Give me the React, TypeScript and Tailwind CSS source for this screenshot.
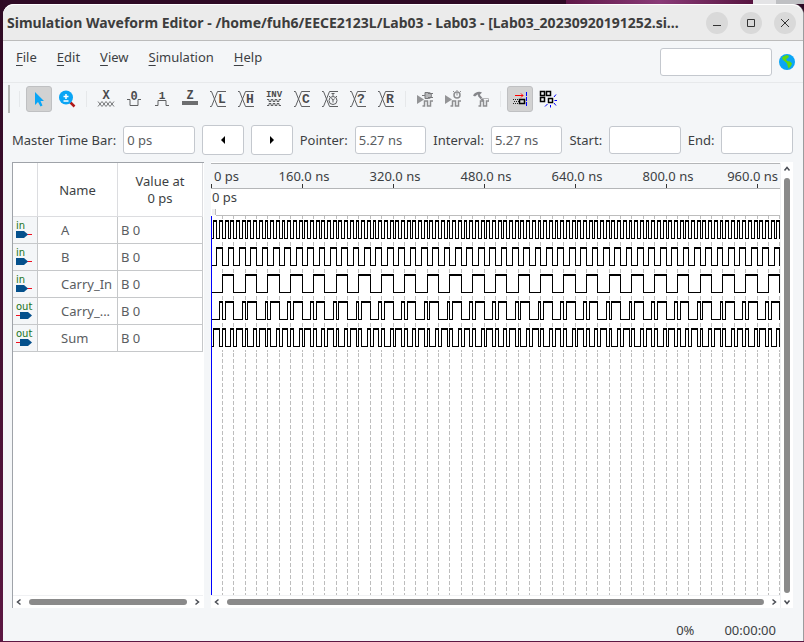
import type { ReactNode } from "react";

const PX_PER_NS = 0.56875;
const SPAN_NS = 3000;
const ROW = 27;

type Signal = { name: string; label: string; dir: "in" | "out"; level: (n: number) => boolean };

const bit = (n: number, b: number) => ((n >> b) & 1) === 1;
const ones = (n: number) => Number(bit(n, 0)) + Number(bit(n, 1)) + Number(bit(n, 2));

const signals: Signal[] = [
  { name: "A", label: "A", dir: "in", level: (n) => bit(n, 0) },
  { name: "B", label: "B", dir: "in", level: (n) => bit(n, 1) },
  { name: "Carry_In", label: "Carry_In", dir: "in", level: (n) => bit(n, 2) },
  { name: "Carry_Out", label: "Carry_...", dir: "out", level: (n) => ones(n) >= 2 },
  { name: "Sum", label: "Sum", dir: "out", level: (n) => ones(n) % 2 === 1 },
];

const xAt = (ns: number) => Math.floor(ns * PX_PER_NS);

function wave(level: (n: number) => boolean, row: number) {
  const high = 5 + row * ROW;
  const low = high + 18;
  let edges = "";
  let tops = "";
  let bottoms = "";
  let prev = level(0);
  let start = 0;
  for (let n = 1; n <= SPAN_NS / 5; n++) {
    const cur = level(n);
    if (cur !== prev) {
      const x = xAt(n * 5);
      edges += `M${x + 0.5} ${high}V${low + 1}`;
      if (prev) tops += `M${start} ${high + 1}H${x + 1}`;
      else bottoms += `M${start} ${low + 0.5}H${x + 1}`;
      start = x;
      prev = cur;
    }
  }
  return { edges, tops, bottoms };
}

const gridXs = Array.from({ length: SPAN_NS / 20 }, (_, i) => xAt((i + 1) * 20) + 0.5);
const ticks = [1, 2, 3, 4, 5];

function Ruler() {
  return (
    <svg className="block h-[26px] w-full shrink-0 border-t border-b border-[#b4b6b8] bg-[#f4f6f8]" aria-label="Time ruler">
      <path d="M0.5 20V25" stroke="#333" />
      <text x="3" y="17" className="fill-[#3c3f43] text-[13px]">0 ps</text>
      {ticks.map((t) => (
        <g key={t}>
          <text x={t * 91 + 2} y="17" textAnchor="middle" className="fill-[#3c3f43] text-[13px]">
            {`${t * 160}.0 ns`}
          </text>
          <path d={`M${t * 91 + 0.5} 20v4`} stroke="#333" />
        </g>
      ))}
      <text x="567" y="17" textAnchor="end" className="fill-[#3c3f43] text-[13px]">960.0 ns</text>
      <path d="M546.5 20v4" stroke="#333" />
    </svg>
  );
}

function Waves() {
  return (
    <svg className="block min-h-0 w-full flex-1 bg-white" shapeRendering="crispEdges" aria-label="Waveforms">
      <path d="M5 0.5H3000" stroke="#bdbdbd" />
      {gridXs.map((x) => (
        <g key={x} stroke="#bdbdbd">
          <path d={`M${x} 1v3M${x} 27v4M${x} 54v4M${x} 81v4M${x} 108v4M${x} 135v2`} />
          <line x1={x} x2={x} y1="138" y2="100%" strokeDasharray="4 2" />
        </g>
      ))}
      {signals.map((s, i) => {
        const w = wave(s.level, i);
        return (
          <g key={s.name} stroke="#000" fill="none">
            <path d={w.edges} />
            <path d={w.tops} strokeWidth="2" />
            <path d={w.bottoms} />
          </g>
        );
      })}
      <line x1="0.5" x2="0.5" y1="1" y2="100%" stroke="#0000ff" />
    </svg>
  );
}

const ink = "#5f6062";

function Glyph({ children }: { children: ReactNode }) {
  return (
    <svg width="18" height="18" viewBox="0 0 18 18" fill="none" stroke={ink} className="overflow-visible" aria-hidden="true">
      {children}
    </svg>
  );
}

function Letter({ x, y, size = 12, children }: { x: number; y: number; size?: number; children: string }) {
  return (
    <text
      x={x}
      y={y}
      fontSize={size}
      textAnchor="middle"
      fill="#4a4b4d"
      stroke="none"
      className="font-['Liberation_Mono',monospace] font-bold"
    >
      {children}
    </text>
  );
}

function Crossed({ children }: { children: ReactNode }) {
  return (
    <Glyph>
      <path d="M1 1.5h1.5l6 15H17M1 16.5h1.5l6-15H17" />
      {children}
    </Glyph>
  );
}

const Pulse = () => <path d="M6.500 16H8.500V11H11.500V16H14.500V11H17" stroke="#8d8e90" strokeWidth="1.500" />;

const valueTools: { name: string; icon: ReactNode }[] = [
  {
    name: "Forcing unknown",
    icon: (
      <Glyph>
        <Letter x={9} y={9}>X</Letter>
        <path d="M1 11.500l4 5 4-5 4 5 4-5M1 16.500l4-5 4 5 4-5 4 5" stroke="#77787a" />
      </Glyph>
    ),
  },
  {
    name: "Forcing low",
    icon: (
      <Glyph>
        <Letter x={9} y={10}>0</Letter>
        <path d="M2 9.500h3v6h8v-6h3" />
      </Glyph>
    ),
  },
  {
    name: "Forcing high",
    icon: (
      <Glyph>
        <Letter x={9} y={9} size={11}>1</Letter>
        <path d="M2 15.500h3v-5h8v5h3" />
      </Glyph>
    ),
  },
  {
    name: "High impedance",
    icon: (
      <Glyph>
        <Letter x={9} y={9}>Z</Letter>
        <path d="M1 13h16" stroke="#6d6e70" strokeWidth="4" />
      </Glyph>
    ),
  },
  { name: "Weak low", icon: <Crossed><Letter x={13} y={13} size={13}>L</Letter></Crossed> },
  { name: "Weak high", icon: <Crossed><Letter x={13} y={13} size={13}>H</Letter></Crossed> },
  {
    name: "Invert",
    icon: (
      <Glyph>
        <Letter x={9} y={7} size={9}>INV</Letter>
        <path d="M2 9.500h2v2h2v-2h2v2h2v-2h2v2h2v-2h2M2 15.500h2v-2h2v2h2v-2h2v2h2v-2h2v2h2" />
      </Glyph>
    ),
  },
  { name: "Count value", icon: <Crossed><Letter x={13} y={13} size={13}>C</Letter></Crossed> },
  {
    name: "Overwrite clock",
    icon: (
      <Crossed>
        <circle cx="12" cy="10.500" r="4" fill="#f4f6f8" />
        <path d="M12 3v3M10.500 3.500h3M10.500 8l1.500 2.500 1.500-2M12 10.500v2M9 6l-1 1M15 6l1 1" />
      </Crossed>
    ),
  },
  { name: "Arbitrary value", icon: <Crossed><Letter x={12} y={13} size={13}>?</Letter></Crossed> },
  { name: "Random value", icon: <Crossed><Letter x={13} y={13} size={13}>R</Letter></Crossed> },
];

const runTools: { name: string; icon: ReactNode }[] = [
  {
    name: "Run functional simulation",
    icon: (
      <Glyph>
        <path d="M1 5l7 4.500L1 14z" fill="#939496" stroke="none" />
        <path d="M9 2.500h3.500a3 3 0 0 1 0 6H9zM6 5.500h3M12 3.500h5M12 7.500h5" stroke="#77787a" fill="#b5b6b8" />
        <Pulse />
      </Glyph>
    ),
  },
  {
    name: "Run timing simulation",
    icon: (
      <Glyph>
        <path d="M1 5l7 4.500L1 14z" fill="#939496" stroke="none" />
        <circle cx="13" cy="5" r="3" stroke="#8d8e90" strokeWidth="1.500" />
        <path d="M13 3v2.500M10 1l-1 1M16 1l1 1M13 0v1" stroke="#8d8e90" />
        <Pulse />
      </Glyph>
    ),
  },
  {
    name: "Generate testbench",
    icon: (
      <Glyph>
        <path d="M1 5.500C3 2 7 1 10 2.500L7 5.500 5.500 4.500 3 6.500z" fill="#85868a" stroke="none" />
        <path d="M6.500 5l5 6" stroke="#85868a" strokeWidth="2" />
        <path d="M9 8.500h7.500v3" stroke="#b5b6b8" />
        <Pulse />
      </Glyph>
    ),
  },
];

function Tool({ name, children, active = false }: { name: string; children: ReactNode; active?: boolean }) {
  return (
    <button
      type="button"
      aria-label={name}
      title={name}
      aria-pressed={active}
      className={
        active
          ? "mx-px flex size-[26px] shrink-0 items-center justify-center rounded-[3px] border border-[#bfc0c2] bg-[#d2d2d2]"
          : "mx-px flex size-[26px] shrink-0 items-center justify-center rounded-[3px]"
      }
    >
      {children}
    </button>
  );
}

const Divider = () => <div className="mx-[5px] h-4 w-px shrink-0 bg-[#e6e8ea]" />;

function Toolbar() {
  return (
    <div className="flex h-[33px] shrink-0 items-center border-t border-[#e7e9eb] pl-[5px]" role="toolbar">
      <div className="h-7 w-0.5 bg-[#b5b7b5]" />
      <div className="mr-[5px] ml-[9px] h-4 w-px bg-[#e6e8ea]" />
      <Tool name="Selection tool" active>
        <svg width="18" height="18" viewBox="0 0 18 18" aria-hidden="true">
          <path d="M5 2v13l3-3 2.500 4.500 2-1L10.500 11H14z" fill="#0aa5f5" />
        </svg>
      </Tool>
      <Tool name="Zoom tool">
        <svg width="18" height="18" viewBox="0 0 18 18" aria-hidden="true">
          <path d="M11.500 11.500l5 5" stroke="#b01818" strokeWidth="2.500" />
          <circle cx="8" cy="7.500" r="7" fill="#0aa5f5" />
          <path d="M5.500 6.500h5M8 4v5M5.500 11h5" stroke="#fff" strokeWidth="1.500" />
        </svg>
      </Tool>
      <Divider />
      {valueTools.map((t) => (
        <Tool key={t.name} name={t.name}>{t.icon}</Tool>
      ))}
      <Divider />
      {runTools.map((t) => (
        <Tool key={t.name} name={t.name}>{t.icon}</Tool>
      ))}
      <Divider />
      <Tool name="Snap to grid" active>
        <svg width="18" height="18" viewBox="0 0 18 18" fill="none" aria-hidden="true">
          <path d="M4 5.500h8M10 3.500l2 2-2 2" stroke="#f00" />
          <path d="M2 9.500h7M2 13.500h7M3 11.500h6" stroke="#222" strokeDasharray="1 1" />
          <path d="M8.500 9.500h5v4h-5z" stroke="#000" strokeWidth="1.500" />
          <path d="M15.500 2v14" stroke="#00f" strokeDasharray="4 1" />
        </svg>
      </Tool>
      <Tool name="Snap to transition">
        <svg width="18" height="18" viewBox="0 0 18 18" fill="none" aria-hidden="true">
          <path d="M1.500 1.500h4v4h-4zM7.500 1.500h4v4h-4zM1.500 7.500h4v4h-4zM9.500 8.500h4v4h-4z" stroke="#000" strokeWidth="1.500" />
          <path d="M15 7l2-2.500M15.500 10.500H18M15 13l2 2.500M11.500 15v2.500M8.500 14l-2.500 2.500" stroke="#00f" />
        </svg>
      </Tool>
    </div>
  );
}

function Field({ label, value }: { label: string; value: string }) {
  const id = label.toLowerCase().replace(/\W+/g, "-");
  return (
    <>
      <label htmlFor={id} className="shrink-0">{label}</label>
      <input
        id={id}
        defaultValue={value}
        className="h-7 min-w-0 flex-1 rounded-[3px] border border-[#c4c8ce] bg-white px-[3px] text-[#5a5d61] outline-none"
      />
    </>
  );
}

function Step({ name, d }: { name: string; d: string }) {
  return (
    <button type="button" aria-label={name} className="flex h-[30px] w-[42px] shrink-0 items-center justify-center rounded-[3px] border border-[#c4c8ce] bg-white">
      <svg width="6" height="8" viewBox="0 0 6 8" aria-hidden="true"><path d={d} /></svg>
    </button>
  );
}

function Chevron({ d }: { d: string }) {
  return (
    <svg width="8" height="8" viewBox="0 0 8 8" fill="none" stroke="#4b4e55" strokeWidth="1.500" className="shrink-0" aria-hidden="true">
      <path d={d} />
    </svg>
  );
}

const LEFT = "M5.500 1.500L2.500 4l3 2.500";
const RIGHT = "M2.500 1.500l3 2.500-3 2.500";

function HScroll() {
  return (
    <div className="flex h-[13px] shrink-0 items-center gap-1.5 border-t border-[#f0f1f3] bg-white px-0.5">
      <Chevron d={LEFT} />
      <div className="h-1.5 flex-1 rounded-full bg-[#8a8a8a]" />
      <Chevron d={RIGHT} />
    </div>
  );
}

function PinIcon({ dir }: { dir: "in" | "out" }) {
  return (
    <svg width="18" height="18" viewBox="0 0 18 18" role="img" aria-label={dir} className="mx-auto block">
      <text x="0" y="8" fontSize="10" fill="#1c741c" className="font-['DejaVu_Sans',sans-serif]">{dir}</text>
      {dir === "in" ? (
        <>
          <path d="M10 13.500h6" stroke="#f01020" />
          <path d="M0 10h8l4 3.500L8 17H0z" fill="#04508c" />
        </>
      ) : (
        <>
          <path d="M0 13.500h5" stroke="#f01020" />
          <path d="M4 10h8l4 3.500-4 3.500H4z" fill="#04508c" />
        </>
      )}
    </svg>
  );
}

function SignalTable() {
  return (
    <table className="w-full table-fixed border-separate border-spacing-0 text-left">
      <colgroup>
        <col className="w-[25px]" />
        <col className="w-20" />
        <col />
      </colgroup>
      <thead>
        <tr className="h-[54px] text-center text-[#3c3f43]">
          <th className="border-r border-b border-[#dcdde0] p-0" aria-label="Direction" />
          <th className="border-r border-b border-[#dcdde0] p-0 font-normal">Name</th>
          <th className="border-r border-b border-[#dcdde0] p-0 leading-[17px] font-normal">Value at<br />0 ps</th>
        </tr>
      </thead>
      <tbody>
        {signals.map((s) => (
          <tr key={s.name} className="h-[27px] text-[#5a5d61]">
            <td className="border-r border-b border-[#c6c8ca] bg-[#f4f6f8] p-0"><PinIcon dir={s.dir} /></td>
            <td className="border-r border-b border-[#c6c8ca] py-0 pr-0 pl-[23px] whitespace-nowrap" title={s.name}>{s.label}</td>
            <td className="border-r border-b border-[#c6c8ca] py-0 pr-0 pl-[3px]">B 0</td>
          </tr>
        ))}
      </tbody>
    </table>
  );
}

function WindowButton({ name, d }: { name: string; d: string }) {
  return (
    <button type="button" aria-label={name} className="flex size-[22px] shrink-0 items-center justify-center rounded-full bg-[#d9d9d9]">
      <svg width="10" height="10" viewBox="0 0 10 10" fill="none" stroke="#333" aria-hidden="true"><path d={d} /></svg>
    </button>
  );
}

const menus = ["File", "Edit", "View", "Simulation", "Help"];

export default function App() {
  return (
    <div className="flex h-screen flex-col bg-linear-to-b from-[#2d0922] to-[#5c1742] pb-px pl-[3px] font-['Noto_Sans',sans-serif] text-[13px] leading-[18px] text-[#3c3f43]">
      <div className="flex h-1 shrink-0 justify-end bg-[#2f0a25]">
        <div className="w-[187px] bg-linear-to-r from-[#5f1747] via-[#8a3b78] to-[#571440]" />
        <div className="w-[23px] bg-[#e4e4e6]" />
        <div className="w-[28px] bg-[#bfc0c3]" />
      </div>
      <div className="flex min-h-0 flex-1 flex-col rounded-t-[11px] border-r border-[#9b9c9e] bg-[#f4f6f8]">
        <header className="flex h-[37px] shrink-0 items-center gap-3 rounded-t-[11px] border-t border-b border-t-white border-b-[#bcbcbc] bg-[#ebebeb] pr-[7px] pl-1">
          <h1 className="min-w-0 flex-1 truncate text-[14px] leading-5 font-bold text-[#3d3d3d]">
            Simulation Waveform Editor - /home/fuh6/EECE2123L/Lab03 - Lab03 - [Lab03_20230920191252.si...
          </h1>
          <WindowButton name="Minimize" d="M1 7.500h8" />
          <WindowButton name="Maximize" d="M1.500 1.500h7v7h-7z" />
          <WindowButton name="Close" d="M1 1l8 8M9 1L1 9" />
        </header>

        <div className="flex h-[41px] shrink-0 items-center pr-2 pl-[13px]">
          <nav className="flex flex-1 gap-5 pb-2.5">
            {menus.map((m) => (
              <button key={m} type="button"><span className="underline underline-offset-3">{m[0]}</span>{m.slice(1)}</button>
            ))}
          </nav>
          <input aria-label="Search" className="mr-[7px] h-7 w-28 rounded-[3px] border border-[#c4c8ce] bg-white px-1 outline-none" />
          <svg width="16" height="16" viewBox="0 0 16 16" role="img" aria-label="Web search">
            <circle cx="8" cy="8" r="8" fill="#0aa5f5" />
            <path d="M4 2.500l4-1.500 2 1-1 2-2 1 1 2 3 .5 2 2-1 2.500-2.500 2.500-1-3L8 9.500 6 7.500 4 6 3 4z" fill="#62d80c" />
          </svg>
        </div>

        <Toolbar />

        <div className="flex h-[47px] shrink-0 items-center gap-[7px] pt-[3px] pr-2.5 pl-[9px]">
          <Field label="Master Time Bar:" value="0 ps" />
          <Step name="Previous transition" d="M5 0v8L1 4z" />
          <Step name="Next transition" d="M1 0v8l4-4z" />
          <Field label="Pointer:" value="5.27 ns" />
          <Field label="Interval:" value="5.27 ns" />
          <Field label="Start:" value="" />
          <Field label="End:" value="" />
        </div>

        <main className="flex min-h-0 flex-1 gap-[7px] pr-2.5 pl-[9px]">
          <section className="flex w-[192px] shrink-0 flex-col border-t border-l border-[#9fa3a9] bg-white pr-px">
            <div className="min-h-0 flex-1 overflow-hidden"><SignalTable /></div>
            <HScroll />
          </section>
          <section className="flex min-w-0 flex-1 bg-white pt-px">
            <div className="flex min-w-0 flex-1 flex-col">
              <Ruler />
              <div className="flex h-[26px] shrink-0 flex-col justify-between pl-px">
                <span className="leading-4">0 ps</span>
                <div className="h-1.5 w-1 border-r border-[#bdbdbd] bg-[#f0f0f0]" />
              </div>
              <Waves />
              <HScroll />
            </div>
            <div className="flex w-[13px] shrink-0 flex-col items-center gap-[5px] border-l border-[#f0f1f3] bg-white py-0.5">
              <Chevron d="M1.500 5.500L4 2.500l2.500 3" />
              <div className="w-1.5 flex-1 rounded-full bg-[#8a8a8a]" />
              <Chevron d="M1.500 2.500L4 5.500l2.500-3" />
            </div>
          </section>
        </main>

        <footer className="flex h-[33px] shrink-0 items-center justify-end gap-[30px] pt-2.5 pr-[27px]">
          <span>0%</span>
          <span>00:00:00</span>
        </footer>
      </div>
    </div>
  );
}
